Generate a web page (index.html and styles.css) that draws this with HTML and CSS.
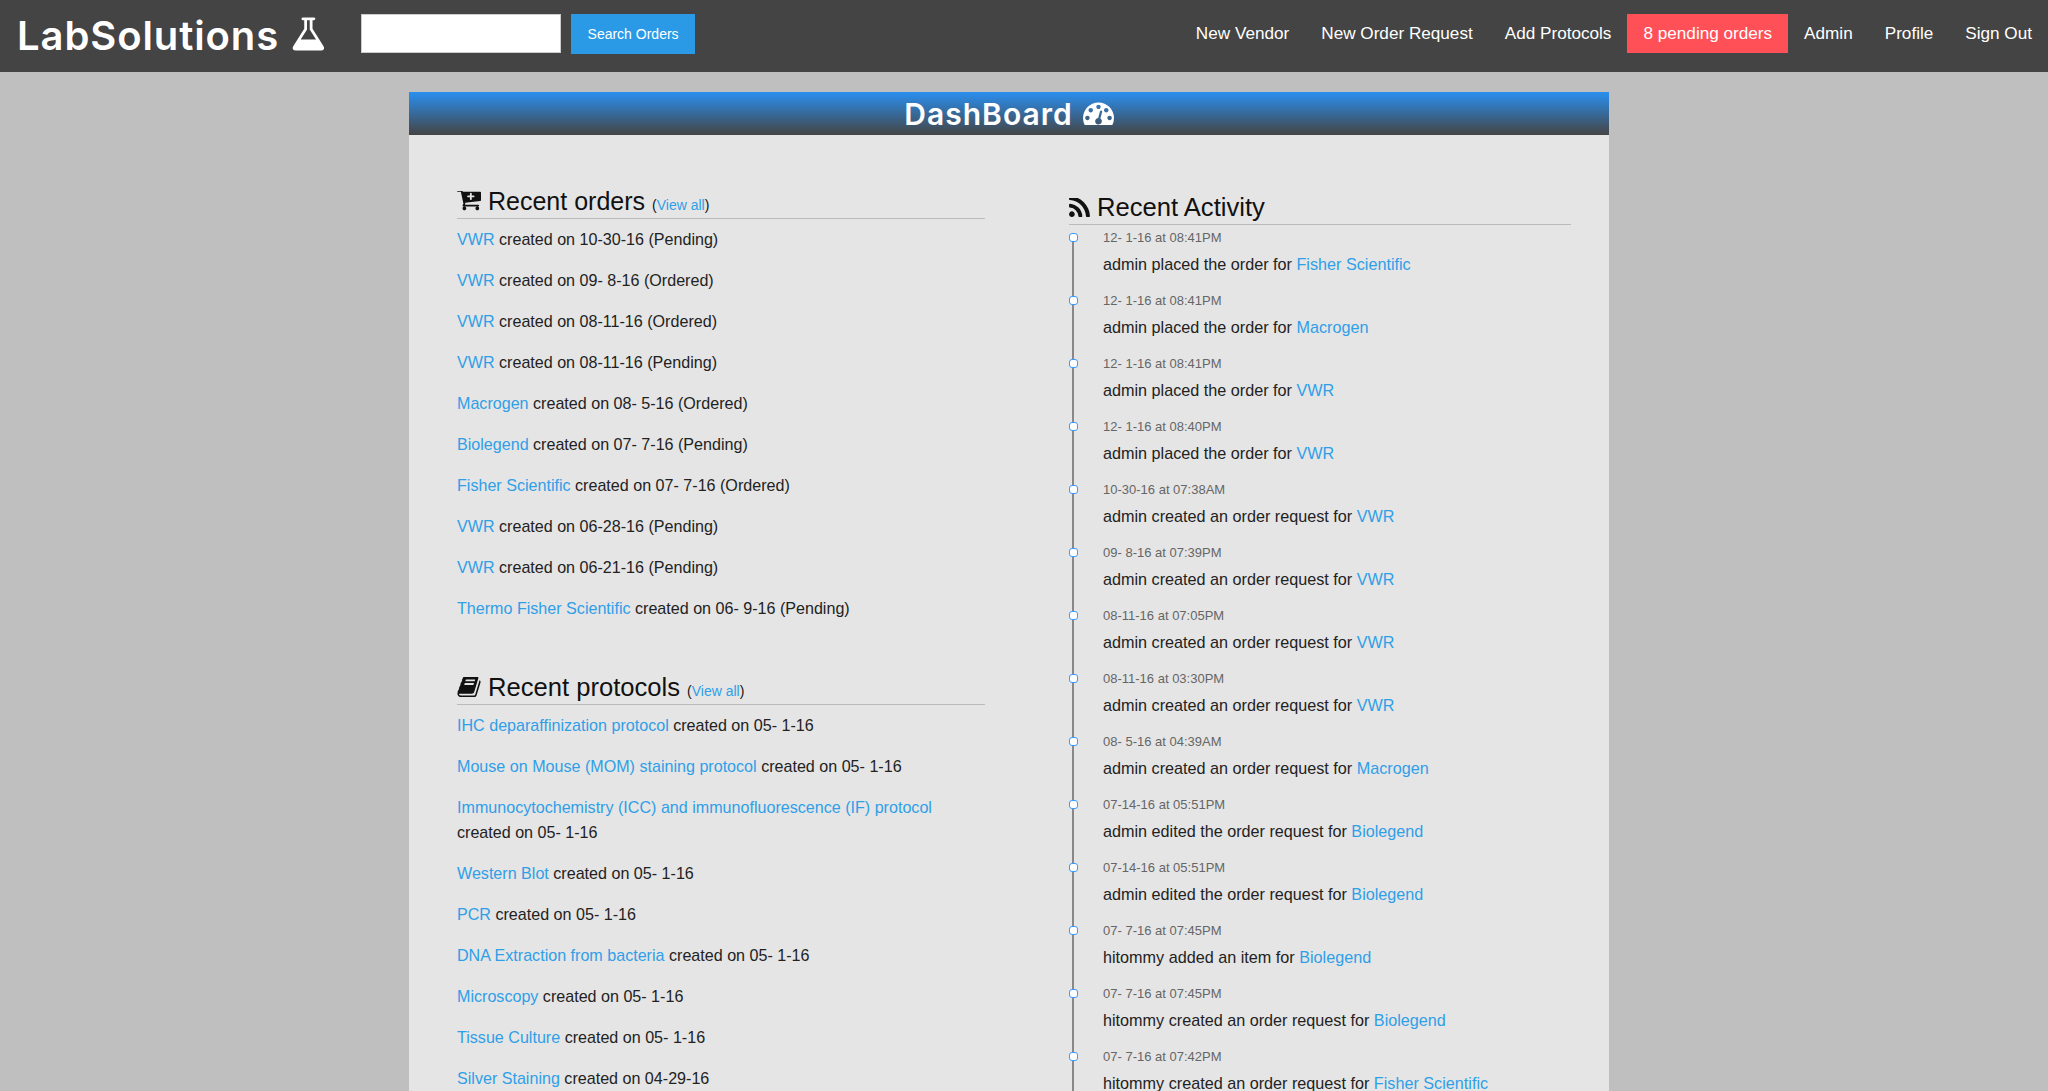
FILE: index.html
```html
<!DOCTYPE html>
<html lang="en">
<head>
    <meta charset="UTF-8">
    <title>LabSolutions - DashBoard</title>
    <link rel="stylesheet" href="styles.css">
</head>
<body>
    <nav class="topbar">
        <a class="logo" href="#">LabSolutions
            <svg class="logo-icon" viewBox="44 128 1576 1536"><path d="M1591 1448q56 89 21.500 152.500t-140.500 63.500h-1152q-106 0-140.500-63.500t21.500-152.500l503-793v-399h-64q-26 0-45-19t-19-45 19-45 45-19h512q26 0 45 19t19 45-19 45-45 19h-64v399zm-779-725l-272 429h712l-272-429-20-31v-436h-128v436z"/></svg>
        </a>
        <form class="search">
            <input class="search-input" type="text">
            <button class="search-btn" type="button">Search Orders</button>
        </form>
        <ul class="nav-links">
            <li><a href="#">New Vendor</a></li>
            <li><a href="#">New Order Request</a></li>
            <li><a href="#">Add Protocols</a></li>
            <li><a class="pending" href="#">8 pending orders</a></li>
            <li><a href="#">Admin</a></li>
            <li><a href="#">Profile</a></li>
            <li><a href="#">Sign Out</a></li>
        </ul>
    </nav>

    <main class="panel">
        <h1 class="panel-title">DashBoard
            <svg class="title-icon" viewBox="0 256 1792 1280"><path d="M384 1152q0-53-37.500-90.500t-90.500-37.500-90.500 37.500-37.500 90.500 37.500 90.500 90.500 37.500 90.500-37.500 37.500-90.500zm192-448q0-53-37.500-90.500t-90.500-37.500-90.500 37.500-37.500 90.500 37.500 90.500 90.500 37.500 90.500-37.500 37.500-90.500zm428 481l101-382q6-26-7.500-48.500t-38.500-29.500-48 6.500-30 39.500l-101 382q-60 5-107 43.500t-63 98.500q-20 77 20 146t117 89 146-20 89-117q16-60-6-117t-72-91zm660-33q0-53-37.500-90.500t-90.500-37.500-90.500 37.500-37.500 90.500 37.500 90.500 90.500 37.500 90.500-37.500 37.500-90.500zm-640-640q0-53-37.500-90.500t-90.500-37.500-90.500 37.500-37.500 90.500 37.500 90.500 90.500 37.500 90.500-37.500 37.500-90.500zm448 192q0-53-37.500-90.500t-90.500-37.500-90.500 37.500-37.500 90.500 37.500 90.500 90.500 37.500 90.500-37.500 37.500-90.500zm320 448q0 261-141 483-19 29-54 29h-1402q-35 0-54-29-141-221-141-483 0-182 71-348t191-286 286-191 348-71 348 71 286 191 191 286 71 348z"/></svg>
        </h1>

        <div class="columns">
            <div class="col-left">
                <section class="orders">
                    <h2 class="section-title">
                        <svg class="section-icon" viewBox="0 256 1664 1280"><path d="M1216 576q0-26-19-45t-45-19h-128v-128q0-26-19-45t-45-19-45 19-19 45v128h-128q-26 0-45 19t-19 45 19 45 45 19h128v128q0 26 19 45t45 19 45-19 19-45v-128h128q26 0 45-19t19-45zm-576 832q0 53-37.500 90.500t-90.500 37.500-90.500-37.500-37.500-90.500 37.500-90.500 90.500-37.500 90.500 37.500 37.500 90.500zm896 0q0 53-37.500 90.500t-90.500 37.500-90.500-37.500-37.500-90.500 37.500-90.500 90.500-37.500 90.500 37.500 37.500 90.500zm128-1088v512q0 24-16 42.500t-41 21.500l-1044 122q1 7 4.500 21.500t6 26.500 2.500 22q0 16-24 64h920q26 0 45 19t19 45-19 45-45 19h-1024q-26 0-45-19t-19-45q0-14 11-39.500t29.500-59.500 20.500-38l-177-823h-204q-26 0-45-19t-19-45 19-45 45-19h256q16 0 28.500 6.500t20 15.500 13 24.500 7.500 26.500 5.500 29.500 4.500 25.500h1201q26 0 45 19t19 45z"/></svg>
                        Recent orders <small>(<a href="#">View all</a>)</small>
                    </h2>
                    <p class="row"><a href="#">VWR</a> created on 10-30-16 (Pending)</p>
                    <p class="row"><a href="#">VWR</a> created on 09- 8-16 (Ordered)</p>
                    <p class="row"><a href="#">VWR</a> created on 08-11-16 (Ordered)</p>
                    <p class="row"><a href="#">VWR</a> created on 08-11-16 (Pending)</p>
                    <p class="row"><a href="#">Macrogen</a> created on 08- 5-16 (Ordered)</p>
                    <p class="row"><a href="#">Biolegend</a> created on 07- 7-16 (Pending)</p>
                    <p class="row"><a href="#">Fisher Scientific</a> created on 07- 7-16 (Ordered)</p>
                    <p class="row"><a href="#">VWR</a> created on 06-28-16 (Pending)</p>
                    <p class="row"><a href="#">VWR</a> created on 06-21-16 (Pending)</p>
                    <p class="row"><a href="#">Thermo Fisher Scientific</a> created on 06- 9-16 (Pending)</p>
                </section>

                <section class="protocols">
                    <h2 class="section-title">
                        <svg class="section-icon" viewBox="0 200 1664 1440"><path d="M1639 478q40 57 18 129l-275 906q-19 64-76.500 107.500t-122.500 43.500h-923q-77 0-148.500-53.500t-99.500-131.500q-24-67-2-127 0-4 3-27t4-37q1-8-3-21.500t-3-19.500q2-11 8-21t16.500-23.500 16.500-23.500q23-38 45-91.500t30-91.500q3-10 .5-30t-.5-28q3-11 17-28t17-23q21-36 42-92t25-90q1-9-2.500-32t.5-28q4-13 22-30.500t22-22.500q19-26 42.500-84.500t27.500-96.500q1-8-3-25.500t-2-26.500q2-8 9-18t18-23 17-21q8-12 16.500-30.500t15-35 16-36 19.500-32 26.500-23.500 36-11.500 47.500 5.500l-1 3q38-9 51-9h761q74 0 114 56t18 130l-274 906q-36 119-71.500 153.500t-128.500 34.500h-869q-27 0-38 15-11 16-1 43 24 70 144 70h923q29 0 56-15.500t35-41.500l300-987q7-22 5-57 38 15 59 43zm-1064 2q-4 13 2 22.500t20 9.500h608q13 0 25.500-9.500t16.500-22.500l21-64q4-13-2-22.500t-20-9.500h-608q-13 0-25.500 9.500t-16.500 22.500zm-83 256q-4 13 2 22.500t20 9.500h608q13 0 25.500-9.500t16.500-22.500l21-64q4-13-2-22.500t-20-9.500h-608q-13 0-25.500 9.500t-16.500 22.500z"/></svg>
                        Recent protocols <small>(<a href="#">View all</a>)</small>
                    </h2>
                    <p class="row"><a href="#">IHC deparaffinization protocol</a> created on 05- 1-16</p>
                    <p class="row"><a href="#">Mouse on Mouse (MOM) staining protocol</a> created on 05- 1-16</p>
                    <p class="row"><a href="#">Immunocytochemistry (ICC) and immunofluorescence (IF) protocol</a> created on 05- 1-16</p>
                    <p class="row"><a href="#">Western Blot</a> created on 05- 1-16</p>
                    <p class="row"><a href="#">PCR</a> created on 05- 1-16</p>
                    <p class="row"><a href="#">DNA Extraction from bacteria</a> created on 05- 1-16</p>
                    <p class="row"><a href="#">Microscopy</a> created on 05- 1-16</p>
                    <p class="row"><a href="#">Tissue Culture</a> created on 05- 1-16</p>
                    <p class="row"><a href="#">Silver Staining</a> created on 04-29-16</p>
                </section>
            </div>

            <section class="col-right">
                <h2 class="section-title">
                    <svg class="section-icon rss" viewBox="192 256 1408 1280"><path d="M576 1344q0 80-56 136t-136 56-136-56-56-136 56-136 136-56 136 56 56 136zm512 123q2 28-17 48-18 21-47 21h-135q-25 0-43-16.500t-20-41.500q-22-229-184.500-391.500t-391.500-184.500q-25-2-41.500-20t-16.500-43v-135q0-29 21-47 17-17 43-17h5q160 13 306 80.500t259 181.500q114 113 181.500 259t80.500 306zm512 2q2 27-18 47-18 20-46 20h-143q-26 0-44.500-17.500t-19.500-42.500q-12-215-101-408.500t-231.500-336-336-231.500-408.500-102q-25-1-42.500-19.500t-17.500-43.500v-143q0-28 20-46 18-18 44-18h3q262 13 501.500 120t425.500 294q187 186 294 425.500t120 501.500z"/></svg>
                    Recent Activity
                </h2>
                <ul class="timeline">
                    <li class="event"><div class="event-time">12- 1-16 at 08:41PM</div><p class="event-text">admin placed the order for <a href="#">Fisher Scientific</a></p></li>
                    <li class="event"><div class="event-time">12- 1-16 at 08:41PM</div><p class="event-text">admin placed the order for <a href="#">Macrogen</a></p></li>
                    <li class="event"><div class="event-time">12- 1-16 at 08:41PM</div><p class="event-text">admin placed the order for <a href="#">VWR</a></p></li>
                    <li class="event"><div class="event-time">12- 1-16 at 08:40PM</div><p class="event-text">admin placed the order for <a href="#">VWR</a></p></li>
                    <li class="event"><div class="event-time">10-30-16 at 07:38AM</div><p class="event-text">admin created an order request for <a href="#">VWR</a></p></li>
                    <li class="event"><div class="event-time">09- 8-16 at 07:39PM</div><p class="event-text">admin created an order request for <a href="#">VWR</a></p></li>
                    <li class="event"><div class="event-time">08-11-16 at 07:05PM</div><p class="event-text">admin created an order request for <a href="#">VWR</a></p></li>
                    <li class="event"><div class="event-time">08-11-16 at 03:30PM</div><p class="event-text">admin created an order request for <a href="#">VWR</a></p></li>
                    <li class="event"><div class="event-time">08- 5-16 at 04:39AM</div><p class="event-text">admin created an order request for <a href="#">Macrogen</a></p></li>
                    <li class="event"><div class="event-time">07-14-16 at 05:51PM</div><p class="event-text">admin edited the order request for <a href="#">Biolegend</a></p></li>
                    <li class="event"><div class="event-time">07-14-16 at 05:51PM</div><p class="event-text">admin edited the order request for <a href="#">Biolegend</a></p></li>
                    <li class="event"><div class="event-time">07- 7-16 at 07:45PM</div><p class="event-text">hitommy added an item for <a href="#">Biolegend</a></p></li>
                    <li class="event"><div class="event-time">07- 7-16 at 07:45PM</div><p class="event-text">hitommy created an order request for <a href="#">Biolegend</a></p></li>
                    <li class="event"><div class="event-time">07- 7-16 at 07:42PM</div><p class="event-text">hitommy created an order request for <a href="#">Fisher Scientific</a></p></li>
                </ul>
            </section>
        </div>
    </main>
</body>
</html>
```

FILE: styles.css
```css
html, body { margin: 0; height: 100%; overflow: hidden; }
body { font-family: "Liberation Sans", Arial, sans-serif; font-size: 16px; background: #bfbfbf; color: #222; }
a { color: #2f9fe8; text-decoration: none; }

.topbar { display: flex; align-items: flex-start; height: 72px; box-sizing: border-box; background: #444; padding: 14px 0 0 17px; }
.logo { display: flex; align-items: center; gap: 11px; height: 43px; color: #fff; font-family: Inter, sans-serif; font-size: 40px; font-weight: 600; letter-spacing: 0.9px; }
.logo-icon { width: 34px; height: 34px; margin-top: -3px; fill: #fff; }
.search { display: flex; gap: 10px; margin-left: 37px; }
.search-input { width: 200px; height: 39px; box-sizing: border-box; border: 1px solid #ccc; background: #fff; padding: 0; }
.search-btn { width: 124px; height: 40px; border: 0; background: #2b9ae6; color: #fff; font: 14px "Liberation Sans", Arial, sans-serif; }
.nav-links { display: flex; list-style: none; margin: 0 0 0 auto; padding: 0; }
.nav-links a { display: block; padding: 0 16px; line-height: 39px; color: #fff; font-size: 17.15px; }
.nav-links .pending { background: #ff5058; }

.panel { width: 1200px; height: 2000px; margin: 20px 0 0 409px; background: #e5e5e5; }
.panel-title { display: flex; align-items: center; justify-content: center; gap: 10px; height: 43px; margin: 0; background: linear-gradient(#2a8ff0, #444); color: #fff; font-family: Inter, sans-serif; font-size: 30px; font-weight: 600; letter-spacing: 1px; }
.title-icon { width: 31px; height: 23px; fill: #fff; }

.columns { display: grid; grid-template-columns: 528px 502px; column-gap: 84px; padding: 0 38px 0 48px; }
.section-title { display: flex; align-items: baseline; gap: 7px; margin: 0 0 8px; border-bottom: 1px solid #bbb; color: #111; font-size: 25px; font-weight: 400; line-height: 34px; }
.section-title small { font-size: 14px; line-height: 1; }
.section-icon { align-self: center; width: 24px; height: 20px; fill: #111; }
.rss { width: 21px; height: 19px; }

.orders { padding-top: 49px; }
.protocols { padding-top: 33px; }
.protocols .section-title { font-size: 25.6px; }
.row { margin: 0 0 15.4px; line-height: 25.6px; font-size: 16.1px; color: #222; }

.col-right { padding-top: 55px; }
.col-right .section-title { margin-bottom: 4px; font-size: 25.6px; }
.timeline { list-style: none; margin: 0; padding: 0; }
.event { position: relative; height: 63px; padding-left: 34px; box-sizing: border-box; }
.event::before { content: ""; position: absolute; left: 3px; top: 4px; bottom: -4px; width: 2px; background: #888; }
.event::after { content: ""; position: absolute; left: 0; top: 4px; width: 7px; height: 7px; border: 1.5px solid #3b9cff; border-radius: 3px; background: #fff; }
.event-time { font-size: 13px; line-height: 18px; color: #666; }
.event-text { margin: 5px 0 0; line-height: 25px; font-size: 16.2px; }
```
